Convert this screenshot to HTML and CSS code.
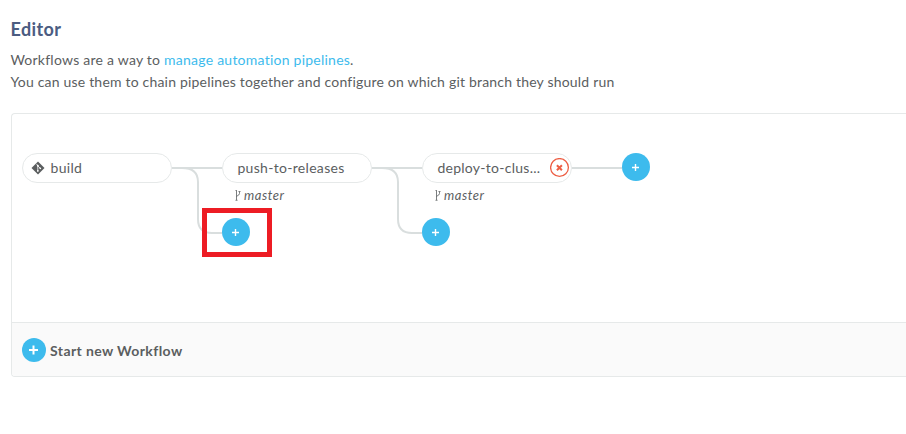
FILE: index.html
```html
<!DOCTYPE html>
<html lang="en">
<head>
<meta charset="utf-8">
<title>Editor</title>
<link rel="stylesheet" href="styles.css">
</head>
<body>
<main class="page">
  <h1 class="title">Editor</h1>
  <p class="intro">Workflows are a way to <a class="link">manage automation pipelines</a>.</p>
  <p class="intro second">You can use them to chain pipelines together and configure on which git branch they should run</p>
  <section class="panel">
    <div class="canvas">
      <svg class="wires" width="894" height="208" viewBox="12 114 894 208">
        <path d="M172 168H222M182 168Q198 168 198 182V219Q198 233 212 233H222"/>
        <path d="M372 168H422M382 168Q398 168 398 182V219Q398 233 412 233H422"/>
        <path d="M572 168H622"/>
      </svg>
      <div class="node build">
        <svg class="git" width="14" height="14" viewBox="0 0 14 14">
          <path class="diamond" d="M7 .5L13.5 7 7 13.5.5 7z"/>
          <path class="branch" d="M5.3 2.8L6.8 4.5V10M6.8 4.8L9.2 7.2"/>
          <circle cx="6.8" cy="4.7" r=".9"/><circle cx="6.8" cy="9.9" r=".9"/><circle cx="9.3" cy="7.3" r=".9"/>
        </svg>
        <span>build</span>
      </div>
      <div class="node push"><span>push-to-releases</span></div>
      <div class="node deploy"><span>deploy-to-clus...</span>
        <svg class="remove" width="20" height="20" viewBox="0 0 20 20"><circle cx="9.5" cy="9.5" r="8.9"/><path d="M6.9 7.2l5 5M11.9 7.2l-5 5"/></svg>
      </div>
      <div class="ref ref-push"><svg width="6" height="11" viewBox="0 0 6 11"><path d="M1.5 1v9M4.5 2v1.6Q4.5 5 1.5 6.4M.5 .5h1.5M3.5 1.5h2M.5 10.3h2"/></svg><span>master</span></div>
      <div class="ref ref-deploy"><svg width="6" height="11" viewBox="0 0 6 11"><path d="M1.5 1v9M4.5 2v1.6Q4.5 5 1.5 6.4M.5 .5h1.5M3.5 1.5h2M.5 10.3h2"/></svg><span>master</span></div>
      <div class="highlight"></div>
      <svg class="add add-build" viewBox="0 0 28 28"><circle cx="14" cy="14" r="14"/><path d="M10 14.5h7M13.5 11v7"/></svg>
      <svg class="add add-push" viewBox="0 0 28 28"><circle cx="14" cy="14" r="14"/><path d="M10 14.5h7M13.5 11v7"/></svg>
      <svg class="add add-deploy" viewBox="0 0 28 28"><circle cx="14" cy="14" r="14"/><path d="M10 14.5h7M13.5 11v7"/></svg>
    </div>
    <div class="footer">
      <svg class="start" width="24" height="24" viewBox="0 0 24 24"><circle cx="12" cy="12" r="12"/><path d="M7 12h9M11.5 7.5v9"/></svg>
      <span class="start-label">Start new Workflow</span>
    </div>
  </section>
</main>
</body>
</html>
```
FILE: styles.css
```css
body {
  margin: 0;
  background: #fff;
  color: #5b5e5f;
  font: 14px/22px Lato, sans-serif;
  letter-spacing: 0.2px;
}
.page {
  padding: 17px 0 0 11px;
  height: 417px;
  overflow: hidden;
}
.title {
  margin: 0 0 8px;
  font-size: 18px;
  line-height: 24px;
  letter-spacing: 0.4px;
  text-indent: -0.5px;
  color: #4b5c81;
}
.intro {
  margin: 0;
  text-indent: -0.6px;
  letter-spacing: 0.24px;
}
.second { letter-spacing: 0.195px; }
.link { color: #3dbbed; }
.panel {
  box-sizing: border-box;
  height: 264px;
  margin-top: 20px;
  border: 1px solid #e6e9e9;
  border-right: 0;
  border-radius: 4px 0 0 4px;
  overflow: hidden;
}
.canvas {
  position: relative;
  height: 208px;
}
.wires {
  position: absolute;
  left: 0;
  top: 0;
  fill: none;
  stroke: #d9dede;
  stroke-width: 2;
}
.node {
  position: absolute;
  top: 39px;
  box-sizing: border-box;
  width: 150px;
  height: 30px;
  display: flex;
  align-items: center;
  padding-left: 14.4px;
  border: 1px solid #e6e9e9;
  border-radius: 15px;
  background: #fff;
  letter-spacing: 0.31px;
}
.build { left: 10px; padding-left: 8px; gap: 5.5px; }
.push { left: 210px; }
.deploy { left: 410px; letter-spacing: 0.27px; }
.git .diamond { fill: #5b5e5f; }
.git .branch { fill: none; stroke: #fff; stroke-width: 0.8; }
.git circle { fill: #fff; }
.remove {
  position: absolute;
  left: 127px;
  top: 4px;
  fill: none;
  stroke: #ed5f45;
  stroke-width: 1.3;
}
.remove path { stroke-width: 2; }
.ref {
  position: absolute;
  top: 70px;
  display: flex;
  align-items: center;
  gap: 3px;
  font-size: 13px;
  font-style: italic;
  letter-spacing: 0.55px;
}
.ref svg { fill: none; stroke: #5b5e5f; stroke-width: 0.8; }
.ref-push { left: 223px; }
.ref-deploy { left: 423px; }
.add {
  position: absolute;
  width: 28px;
  height: 28px;
}
.add circle, .start circle { fill: #3dbbed; }
.add path { stroke: #fff; stroke-width: 1.4; }
.add-build { left: 210px; top: 104px; }
.add-push { left: 410px; top: 104px; }
.add-deploy { left: 610px; top: 39px; }
.highlight {
  position: absolute;
  left: 190px;
  top: 94px;
  box-sizing: border-box;
  width: 70px;
  height: 49px;
  border: 5px solid #ed1c24;
}
.footer {
  height: 53px;
  display: flex;
  align-items: center;
  gap: 4px;
  padding-left: 10px;
  border-top: 1px solid #e6e9e9;
  background: #fafafa;
}
.start path { stroke: #fff; stroke-width: 2; }
.start-label {
  font-weight: 700;
  padding-top: 3px;
  letter-spacing: 0.4px;
}
```
